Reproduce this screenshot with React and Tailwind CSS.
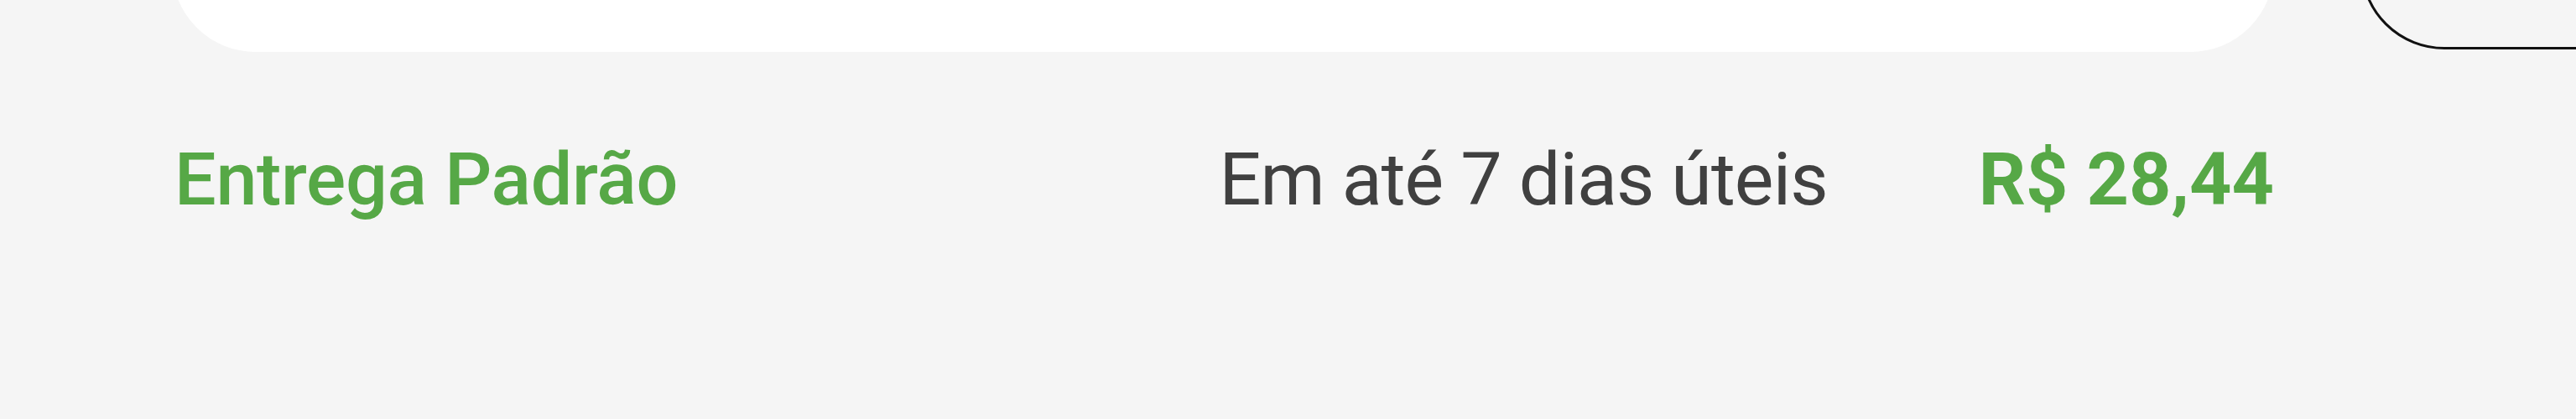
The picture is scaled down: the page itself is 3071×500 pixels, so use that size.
import React from 'react';

const ShippingOption = ({ name, eta, price }) => (
  <div className="flex items-baseline w-[2506px] ml-[205px] mt-[108px] leading-none" style={{ fontFamily: 'Roboto, "Liberation Sans", sans-serif' }}>
    <span className="flex-1 pl-[3px] text-[88px] font-medium tracking-[-0.3px] text-[#56a846]">{name}</span>
    <span className="text-[88px] tracking-[-0.9px] text-[#404040]">{eta}</span>
    <span className="ml-[180px] text-[88px] font-bold text-[#56a846]">{price}</span>
  </div>
);

export default function App() {
  return (
    <div className="w-[3071px] h-[500px] bg-[#f5f5f5] overflow-hidden">
      <div className="flex items-start">
        {/* summary card and the outlined panel next to it, both cut off at the top */}
        <div className="ml-[205px] w-[2506px] h-[200px] -mt-[138px] bg-white rounded-[100px]" />
        <div className="ml-[103px] flex-1 h-[200px] -mt-[141px] -mr-[200px] border-[3px] border-[#111] rounded-[100px]" />
      </div>
      <ShippingOption name="Entrega Padrão" eta="Em até 7 dias úteis" price="R$ 28,44" />
    </div>
  );
}
